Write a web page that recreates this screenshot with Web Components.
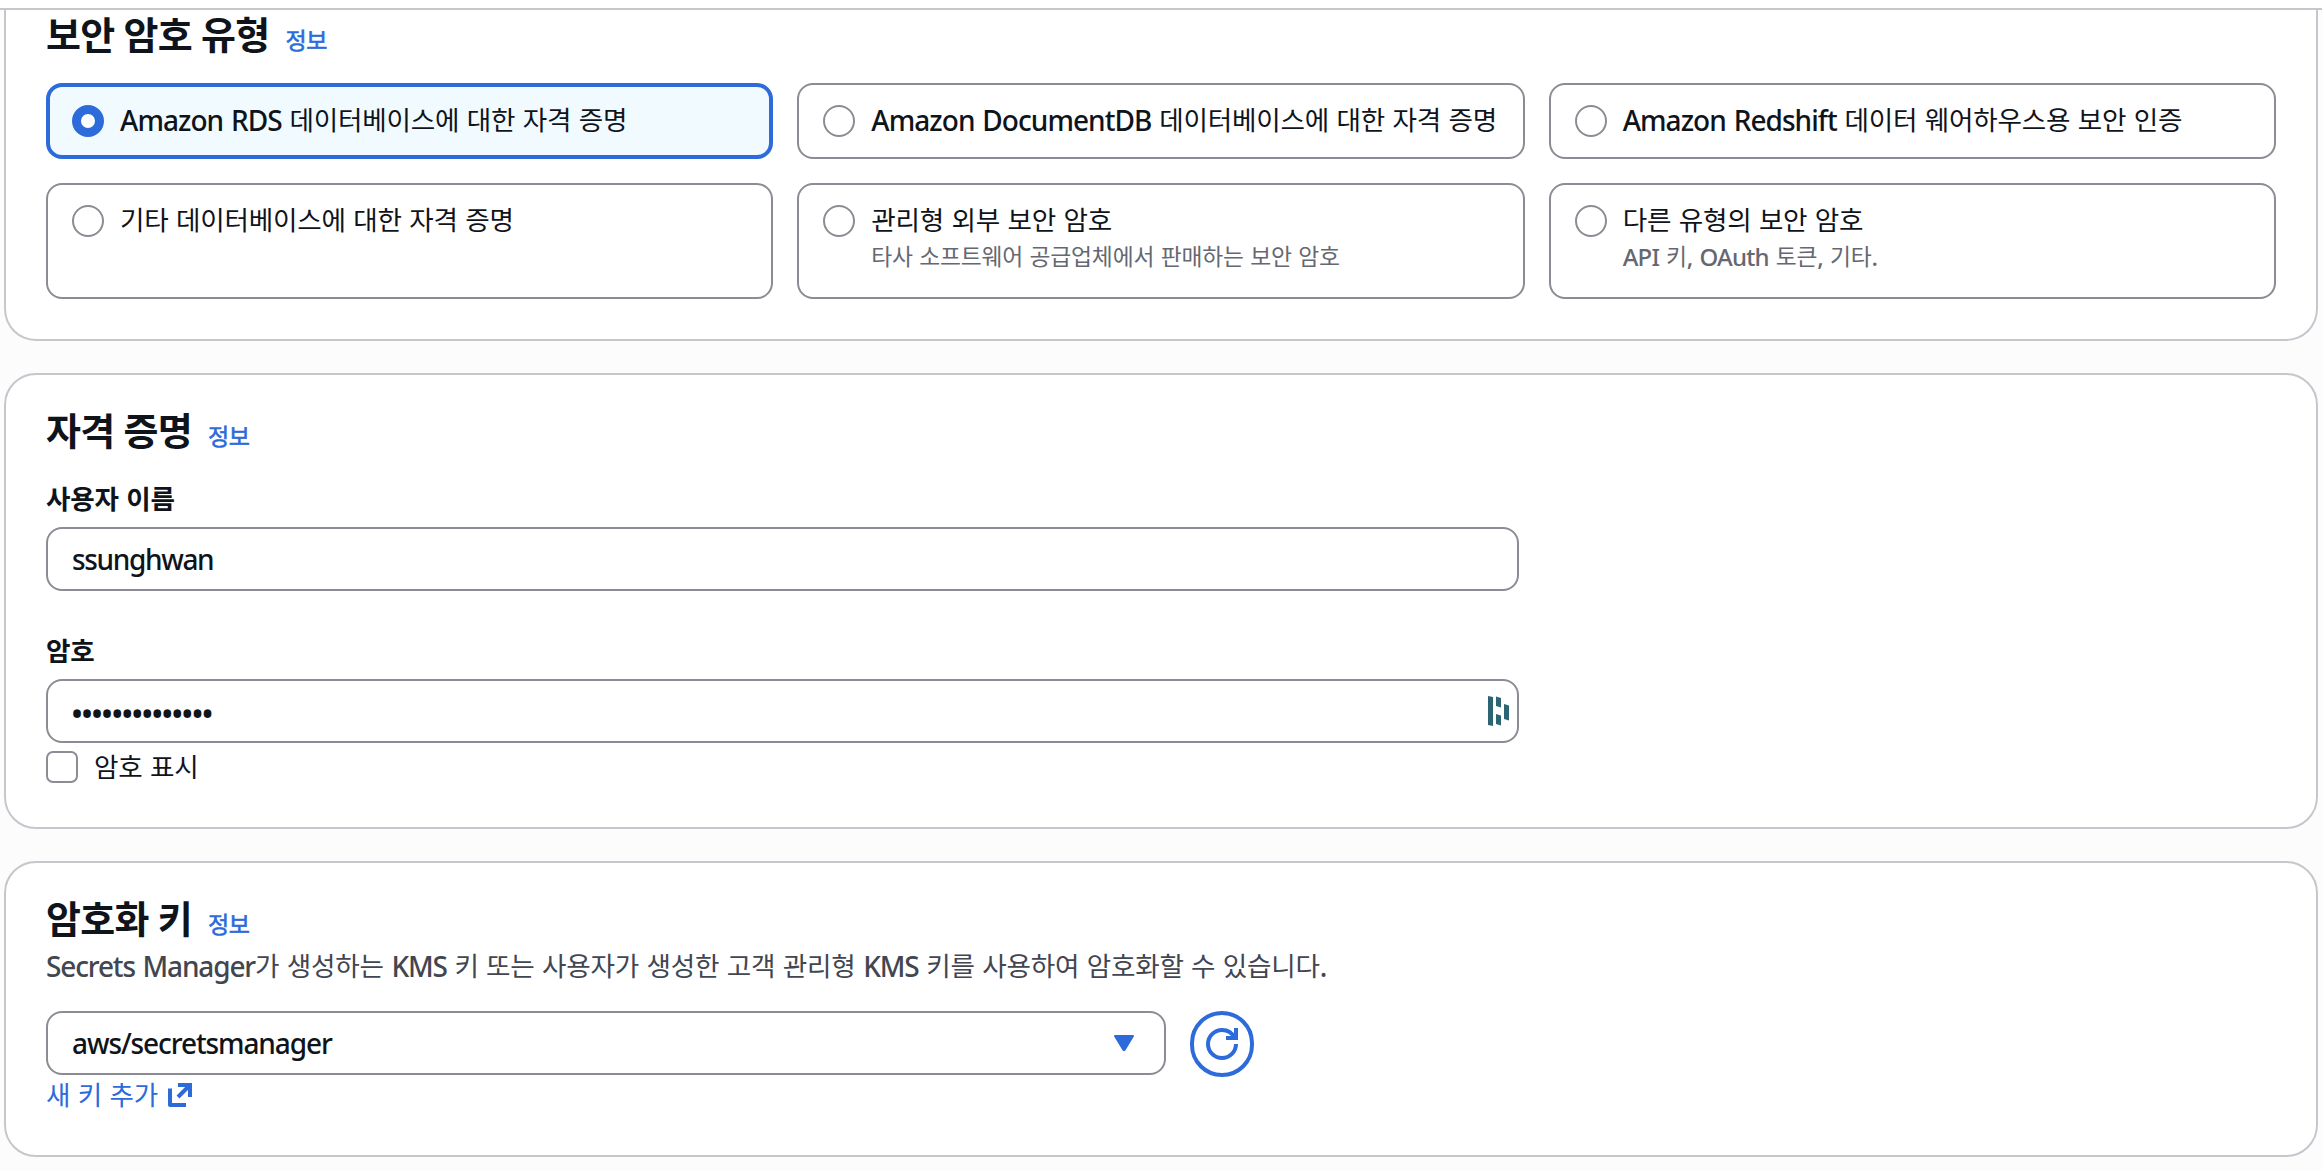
<!DOCTYPE html>
<html lang="ko">
<head>
<meta charset="UTF-8" />
<title>Secrets Manager</title>
<style>
  body {
    margin: 0;
    background: #fcfcfd;
    color: #0f141a;
    font-family: "Noto Sans", "Noto Sans CJK KR", sans-serif;
    font-size: 28px;
    line-height: 40px;
    --blue: #2d6bdb;
    --line: #8c8c94;
    --divider: #c6c6cd;
  }
</style>
</head>
<body>
<secret-page>
  <form-section heading="보안 암호 유형" clipped>
    <tile-grid>
      <radio-tile label="Amazon RDS 데이터베이스에 대한 자격 증명" checked></radio-tile>
      <radio-tile label="Amazon DocumentDB 데이터베이스에 대한 자격 증명"></radio-tile>
      <radio-tile label="Amazon Redshift 데이터 웨어하우스용 보안 인증"></radio-tile>
      <radio-tile label="기타 데이터베이스에 대한 자격 증명"></radio-tile>
      <radio-tile label="관리형 외부 보안 암호" description="타사 소프트웨어 공급업체에서 판매하는 보안 암호"></radio-tile>
      <radio-tile label="다른 유형의 보안 암호" description="API 키, OAuth 토큰, 기타."></radio-tile>
    </tile-grid>
  </form-section>
  <form-section heading="자격 증명">
    <form-field label="사용자 이름">
      <text-box value="ssunghwan"></text-box>
    </form-field>
    <form-field label="암호">
      <text-box value="••••••••••••••" secret></text-box>
    </form-field>
    <check-box label="암호 표시"></check-box>
  </form-section>
  <form-section heading="암호화 키" description="Secrets Manager가 생성하는 KMS 키 또는 사용자가 생성한 고객 관리형 KMS 키를 사용하여 암호화할 수 있습니다.">
    <key-picker value="aws/secretsmanager"></key-picker>
    <external-link>새 키 추가</external-link>
  </form-section>
</secret-page>

<script>
  // Hangul and Latin need different sizes and tracking, so each run gets its own span.
  const runs = (text) =>
    text
      .split(/([가-힣]+(?:\s+[가-힣]+)*)/)
      .filter(Boolean)
      .map((run) => `<span class="${/[가-힣]/.test(run) ? "ko" : "en"}">${run}</span>`)
      .join("");

  const runStyle = `
    .ko { font-size: 0.95em; line-height: 0; letter-spacing: -0.22px; word-spacing: 0.8px; vertical-align: 1px; }
    .en { letter-spacing: var(--en-track, -0.95px); word-spacing: 1.5px; font-weight: 500; white-space: pre; }
  `;

  class BaseElement extends HTMLElement {
    connectedCallback() {
      if (this.shadowRoot) return;
      const shadow = this.attachShadow({ mode: "open" });
      const template = document.createElement("template");
      template.innerHTML = `<style>${runStyle}${this.css()}</style>${this.markup()}`;
      shadow.appendChild(template.content.cloneNode(true));
    }

    attr(name) {
      return this.getAttribute(name) || "";
    }
  }

  class SecretPage extends BaseElement {
    css() {
      return `
        :host { display: block; }
        .top { height: 8px; background: #fff; border-bottom: 2px solid var(--divider); }
        main { display: flex; flex-direction: column; gap: 32px; padding: 0 4px; }
      `;
    }
    markup() {
      return `<div class="top"></div><main><slot></slot></main>`;
    }
  }

  class FormSection extends BaseElement {
    css() {
      return `
        :host {
          display: block;
          box-sizing: border-box;
          padding: 31px 40px 40px;
          border: 2px solid var(--divider);
          border-radius: 32px;
          background: #fff;
        }
        :host([clipped]) {
          padding-top: 0;
          border-top: 0;
          border-radius: 0 0 32px 32px;
        }
        header { display: flex; align-items: baseline; gap: 16px; height: 49px; line-height: 48px; }
        :host([clipped]) header { height: 73px; }
        h2 { margin: 0; font-size: 38px; font-weight: 700; letter-spacing: -0.75px; }
        a {
          font-size: 23px;
          letter-spacing: -0.4px;
          color: var(--blue);
          -webkit-text-stroke: 0.6px var(--blue);
        }
        p { margin: 3px 0 25px; height: 40px; color: #424650; --en-track: -1.15px; }
      `;
    }
    markup() {
      const description = this.attr("description");
      return `
        <header><h2>${this.attr("heading")}</h2><a>정보</a></header>
        ${description ? `<p>${runs(description)}</p>` : ""}
        <slot></slot>
      `;
    }
  }

  class TileGrid extends BaseElement {
    css() {
      return `
        :host {
          display: grid;
          grid-template-columns: repeat(3, 1fr);
          grid-template-rows: 76px 116px;
          gap: 24px;
        }
      `;
    }
    markup() {
      return `<slot></slot>`;
    }
  }

  class RadioTile extends BaseElement {
    css() {
      return `
        :host {
          display: flex;
          gap: 16px;
          box-sizing: border-box;
          padding: 16px 24px;
          border: 2px solid var(--line);
          border-radius: 16px;
        }
        :host([checked]) {
          padding: 14px 22px;
          border: 4px solid var(--blue);
          background: #f1fbff;
        }
        .radio {
          flex: none;
          box-sizing: border-box;
          width: 32px;
          height: 32px;
          margin-top: 4px;
          border: 2px solid var(--line);
          border-radius: 50%;
          background: #fff;
        }
        :host([checked]) .radio { border: 9px solid var(--blue); }
        .text { margin-top: -1px; white-space: nowrap; }
        .description { margin-top: 1px; font-size: 24px; line-height: 32px; color: #656871; --en-track: -0.8px; }
      `;
    }
    markup() {
      const description = this.attr("description");
      return `
        <div class="radio"></div>
        <div class="text">
          <div class="label">${runs(this.attr("label"))}</div>
          ${description ? `<div class="description">${runs(description)}</div>` : ""}
        </div>
      `;
    }
  }

  class FormField extends BaseElement {
    css() {
      return `
        :host { display: block; width: 1473px; margin-top: 24px; }
        :host(:not(:first-of-type)) { margin-top: 40px; }
        label { display: block; height: 48px; font-weight: 700; }
      `;
    }
    markup() {
      return `<label>${runs(this.attr("label"))}</label><slot></slot>`;
    }
  }

  class TextBox extends BaseElement {
    css() {
      return `
        :host {
          display: flex;
          align-items: center;
          justify-content: space-between;
          box-sizing: border-box;
          height: 64px;
          padding: 0 8px 0 24px;
          border: 2px solid var(--line);
          border-radius: 16px;
          background: #fff;
          --en-track: -1.35px;
        }
        :host([secret]) .en { margin: 6px 0 0 -1px; font-size: 32px; letter-spacing: -2px; }
      `;
    }
    markup() {
      // vault icon of the password manager sits at the end of secret fields
      const vault = `
        <svg width="21" height="30" viewBox="0 0 21 30" fill="#2d6474">
          <path d="M0 0l5 1v29l-5-1zM8 .5l5 1.500v9.500l-5-1.500zM8 18l5 1.500v10l-5-1.500zM16 8l5 1.500v15l-5-1.500z" />
        </svg>`;
      return `${runs(this.attr("value"))}${this.hasAttribute("secret") ? vault : ""}`;
    }
  }

  class CheckBox extends BaseElement {
    css() {
      return `
        :host { display: flex; align-items: center; gap: 16px; height: 40px; margin-top: 4px; }
        .box {
          box-sizing: border-box;
          width: 32px;
          height: 32px;
          border: 2px solid var(--line);
          border-radius: 7px;
          background: #fff;
        }
      `;
    }
    markup() {
      return `<div class="box"></div><div>${runs(this.attr("label"))}</div>`;
    }
  }

  class KeyPicker extends BaseElement {
    css() {
      return `
        :host { display: flex; gap: 24px; height: 64px; }
        .select {
          display: flex;
          align-items: center;
          justify-content: space-between;
          box-sizing: border-box;
          width: 1120px;
          padding: 0 30px 0 24px;
          border: 2px solid var(--line);
          border-radius: 16px;
          --en-track: -1.1px;
        }
        .refresh {
          display: flex;
          align-items: center;
          justify-content: center;
          box-sizing: border-box;
          width: 64px;
          height: 66px;
          padding: 0;
          border: 4px solid var(--blue);
          border-radius: 33px;
          background: #fff;
        }
      `;
    }
    markup() {
      return `
        <div class="select">
          ${runs(this.attr("value"))}
          <svg width="20" height="16" viewBox="0 0 20 16" fill="#2d6bdb" stroke="#2d6bdb" stroke-width="2" stroke-linejoin="round">
            <path d="M1 1h18l-8.500 14h-1z" />
          </svg>
        </div>
        <button class="refresh">
          <svg width="32" height="32" viewBox="0 0 16 16" fill="none" stroke="#2d6bdb" stroke-width="2">
            <path d="M15 8c0 3.870-3.130 7-7 7s-7-3.130-7-7 3.130-7 7-7c2.790 0 5.200 1.630 6.330 4" />
            <path d="M10 5h5V0" />
          </svg>
        </button>
      `;
    }
  }

  class ExternalLink extends BaseElement {
    css() {
      return `
        :host { display: flex; align-items: center; gap: 10px; height: 40px; color: var(--blue); }
        .ko { line-height: 40px; }
      `;
    }
    markup() {
      return `
        <span class="ko"><slot></slot></span>
        <svg width="24" height="24" viewBox="0 0 24 24" fill="none" stroke="#2d6bdb" stroke-width="4" stroke-linejoin="round">
          <path d="M10 2h12v12M22 2L10 14" stroke-linejoin="miter" />
          <path d="M2 5.500V22h16" />
        </svg>
      `;
    }
  }

  customElements.define("secret-page", SecretPage);
  customElements.define("form-section", FormSection);
  customElements.define("tile-grid", TileGrid);
  customElements.define("radio-tile", RadioTile);
  customElements.define("form-field", FormField);
  customElements.define("text-box", TextBox);
  customElements.define("check-box", CheckBox);
  customElements.define("key-picker", KeyPicker);
  customElements.define("external-link", ExternalLink);
</script>
</body>
</html>
